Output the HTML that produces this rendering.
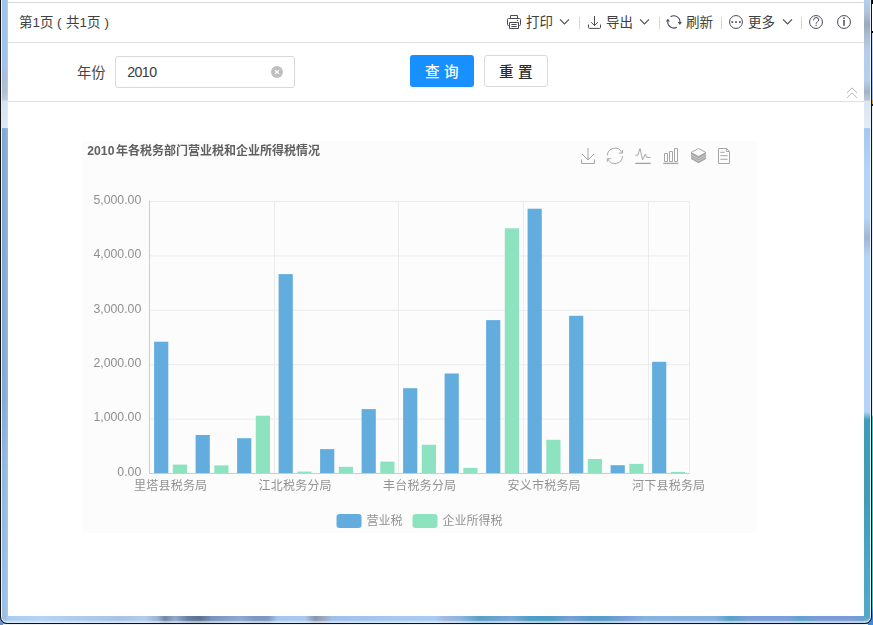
<!DOCTYPE html>
<html lang="zh-CN"><head><meta charset="utf-8"><title>2010年各税务部门营业税和企业所得税情况</title>
<style>
html,body{margin:0;padding:0}
body{width:873px;height:625px;position:relative;overflow:hidden;background:#fff;font-family:"Liberation Sans",sans-serif;}
.ct,.ic,.chart,.abs{position:absolute;display:block;overflow:visible}
.ct text{font-family:"Liberation Sans","Noto Sans CJK SC",sans-serif}
.win{position:absolute;left:8px;top:0;width:856px;height:616px;background:#fff;overflow:hidden}
.topline{position:absolute;left:0;top:2px;width:856px;height:1px;background:#dcdcdc}
.header{position:absolute;left:0;top:3px;width:856px;height:39px;border-bottom:1px solid #e0e0e0;background:#fff}
.params{position:absolute;left:0;top:43px;width:856px;height:58px;border-bottom:1px solid #e0e0e0;background:#fff}
.sep{position:absolute;top:17px;width:1px;height:12px;background:#d5d5dc}
.input{position:absolute;left:115px;top:56px;width:178px;height:29.5px;border:1px solid #d9d9d9;border-radius:3px;background:#fff}
.input span{position:absolute;left:11.2px;top:7.4px;font-size:14.2px;line-height:16px;letter-spacing:-0.55px;color:#3a3a3a}
.clear{position:absolute;left:271px;top:66px;width:12px;height:12px;border-radius:50%;background:#bfbfbf}
.btn{position:absolute;top:55px;width:64px;height:32px;border-radius:3px;box-sizing:border-box}
.btn.primary{left:410px;background:#1890ff}
.btn.plain{left:484px;background:#fff;border:1px solid #d9d9d9}
.chartbg{position:absolute;left:82px;top:141px;width:675px;height:392px;background:#fcfcfc}
.chart{will-change:transform}
.chart text{font-family:"Liberation Sans","Noto Sans CJK SC",sans-serif}
.yl{font-size:12.3px;fill:#8f8f8f}
</style></head><body>

<svg class="abs frame" style="left:0;top:0" width="873" height="625" viewBox="0 0 873 625">
<defs>
<clipPath id="wc"><rect x="1" y="-30" width="870" height="653" rx="6"/></clipPath>
<linearGradient id="gl" x1="0" y1="0" x2="0" y2="625" gradientUnits="userSpaceOnUse"><stop offset="0.0000" stop-color="#a3c4ec"/><stop offset="0.1088" stop-color="#a3c4ec"/><stop offset="0.1216" stop-color="#a9bfdc"/><stop offset="0.1472" stop-color="#b3c0d4"/><stop offset="0.1600" stop-color="#c3cfdf"/><stop offset="0.1624" stop-color="#d9e4f2"/><stop offset="0.2040" stop-color="#e1ebf6"/><stop offset="0.2058" stop-color="#86a9d4"/><stop offset="0.6400" stop-color="#89acd6"/><stop offset="0.7520" stop-color="#96b9e2"/><stop offset="1.0000" stop-color="#9ec1e9"/></linearGradient>
<linearGradient id="glh" x1="0" y1="0" x2="8" y2="0" gradientUnits="userSpaceOnUse"><stop offset="0" stop-color="#1f4a80" stop-opacity=".14"/><stop offset=".5" stop-color="#8090b0" stop-opacity="0"/><stop offset="1" stop-color="#fff" stop-opacity=".2"/></linearGradient>
<linearGradient id="gr" x1="0" y1="0" x2="0" y2="625" gradientUnits="userSpaceOnUse"><stop offset="0.0000" stop-color="#b3cfec"/><stop offset="0.0192" stop-color="#afc3dc"/><stop offset="0.0400" stop-color="#9aa9ba"/><stop offset="0.0544" stop-color="#a9bace"/><stop offset="0.0800" stop-color="#b4cdea"/><stop offset="0.1280" stop-color="#b5d0ee"/><stop offset="0.1472" stop-color="#a3b3c6"/><stop offset="0.1600" stop-color="#bcc8d6"/><stop offset="0.1624" stop-color="#dbe6f3"/><stop offset="0.2040" stop-color="#e2ecf7"/><stop offset="0.2058" stop-color="#a5c8f0"/><stop offset="0.2720" stop-color="#b3d4f7"/><stop offset="0.3488" stop-color="#b3d4f7"/><stop offset="0.3808" stop-color="#9fb7d6"/><stop offset="0.4096" stop-color="#b3d4f7"/><stop offset="0.6592" stop-color="#b3d4f7"/><stop offset="0.6720" stop-color="#3f9db8"/><stop offset="0.8000" stop-color="#409cb6"/><stop offset="0.8960" stop-color="#4aa5c4"/><stop offset="0.9856" stop-color="#52a8c8"/><stop offset="1.0000" stop-color="#7fb2dc"/></linearGradient>
<linearGradient id="gb" x1="0" y1="0" x2="873" y2="0" gradientUnits="userSpaceOnUse"><stop offset="0.0000" stop-color="#a9c9ee"/><stop offset="0.0458" stop-color="#b4d3f5"/><stop offset="0.1375" stop-color="#a8c3e6"/><stop offset="0.1661" stop-color="#b3cbee"/><stop offset="0.1810" stop-color="#98b0d4"/><stop offset="0.1890" stop-color="#7086aa"/><stop offset="0.2005" stop-color="#93a9cc"/><stop offset="0.2153" stop-color="#667ea3"/><stop offset="0.2291" stop-color="#5c7193"/><stop offset="0.2428" stop-color="#7a93ba"/><stop offset="0.2749" stop-color="#8fa8cf"/><stop offset="0.2921" stop-color="#7d97c0"/><stop offset="0.3070" stop-color="#8098c0"/><stop offset="0.3184" stop-color="#a6c6ec"/><stop offset="0.3494" stop-color="#a9c9ee"/><stop offset="0.3608" stop-color="#8795ad"/><stop offset="0.3700" stop-color="#9aa6bb"/><stop offset="0.3803" stop-color="#9fc0ea"/><stop offset="0.4582" stop-color="#a7c9f0"/><stop offset="0.4983" stop-color="#a8cbf2"/><stop offset="0.5097" stop-color="#a0b8dc"/><stop offset="0.5269" stop-color="#8fb5e0"/><stop offset="0.5498" stop-color="#5a9fc6"/><stop offset="0.5727" stop-color="#6fa3d2"/><stop offset="0.5865" stop-color="#7aa6d8"/><stop offset="0.6071" stop-color="#4f9dc2"/><stop offset="0.6323" stop-color="#4f9dc2"/><stop offset="0.6529" stop-color="#789fd6"/><stop offset="0.6758" stop-color="#5a9bc8"/><stop offset="0.6930" stop-color="#5a9bc8"/><stop offset="0.7159" stop-color="#7a9fd8"/><stop offset="0.7388" stop-color="#86b2e0"/><stop offset="0.8190" stop-color="#86b0e0"/><stop offset="0.8362" stop-color="#55a2c8"/><stop offset="0.8568" stop-color="#7a9fd8"/><stop offset="0.9026" stop-color="#7a9fd8"/><stop offset="0.9164" stop-color="#5fa4cc"/><stop offset="0.9370" stop-color="#7a9cd6"/><stop offset="0.9737" stop-color="#7a9cd6"/><stop offset="0.9897" stop-color="#6a9fd0"/><stop offset="1.0000" stop-color="#6a9fd0"/></linearGradient>
<linearGradient id="gbv" x1="0" y1="616" x2="0" y2="623" gradientUnits="userSpaceOnUse"><stop offset="0" stop-color="#fff" stop-opacity="0"/><stop offset=".45" stop-color="#fff" stop-opacity="0"/><stop offset="1" stop-color="#fff" stop-opacity=".22"/></linearGradient>
<linearGradient id="ox" x1="0" y1="0" x2="0" y2="625" gradientUnits="userSpaceOnUse">
<stop offset="0" stop-color="#000"/><stop offset=".0064" stop-color="#000"/><stop offset=".0065" stop-color="#fff"/><stop offset=".0495" stop-color="#fff"/><stop offset=".0496" stop-color="#000"/><stop offset=".0528" stop-color="#000"/><stop offset=".0529" stop-color="#cfe0f5"/><stop offset=".16" stop-color="#9fc0ea"/><stop offset=".1601" stop-color="#f0a030"/><stop offset=".1664" stop-color="#f0a030"/><stop offset=".1665" stop-color="#222"/><stop offset=".1696" stop-color="#222"/><stop offset=".1697" stop-color="#e8eef5"/><stop offset=".664" stop-color="#dfe9f5"/><stop offset=".667" stop-color="#2fd3cf"/><stop offset=".97" stop-color="#35c8c8"/><stop offset=".985" stop-color="#3a8be0"/><stop offset="1" stop-color="#3a8be0"/></linearGradient>
</defs>
<rect x="0" y="0" width="8" height="625" fill="#6c8fbf"/>
<rect x="864" y="0" width="9" height="625" fill="url(#ox)"/>
<rect x="0" y="624" width="873" height="1" fill="#f1f1f1"/>
<rect x="0" y="618" width="3" height="7" fill="#6c8fbf"/>
<rect x="868" y="620" width="5" height="5" fill="#3a8be0"/>
<g clip-path="url(#wc)">
<rect x="0" y="0" width="8" height="625" fill="url(#gl)"/><rect x="0" y="0" width="8" height="625" fill="url(#glh)"/>
<rect x="864" y="0" width="8" height="625" fill="url(#gr)"/>
<rect x="8" y="616" width="856" height="9" fill="url(#gb)"/>
<rect x="0" y="616" width="873" height="9" fill="url(#gbv)"/>
</g>
<rect x="1.5" y="-30" width="869" height="652" rx="5.5" fill="none" stroke="#eaf1f9" stroke-width="1"/>
<rect x="0.5" y="-30" width="871" height="653.5" rx="6.5" fill="none" stroke="#141414" stroke-width="1"/>
</svg>

<div class="win">
<div class="topline"></div>
<div class="header"></div>
<div class="params"></div>
</div>
<svg class="ct" role="img" style="left:19.20px;top:14.30px" width="35.89" height="17.55" viewBox="0 0 35.89 17.55"><text x="0" y="13.5" font-size="13.5" fill="#404040">第1页</text></svg>
<svg class="ct" role="img" style="left:57.30px;top:14.10px" width="6.56" height="17.55" viewBox="0 0 6.56 17.55"><text x="0" y="13.5" font-size="13.5" fill="#404040">(</text></svg>
<svg class="ct" role="img" style="left:65.70px;top:14.30px" width="35.14" height="17.55" viewBox="0 0 35.14 17.55"><text x="0" y="13.5" font-size="13.5" fill="#404040">共1页</text></svg>
<svg class="ct" role="img" style="left:103.80px;top:14.10px" width="6.56" height="17.55" viewBox="0 0 6.56 17.55"><text x="0.5" y="13.5" font-size="13.5" fill="#404040">)</text></svg>
<svg class="ic" style="left:507.00px;top:15.00px" width="14" height="14" viewBox="0 0 14 14" fill="none" stroke="#4a4a55" stroke-width="1.00"><path d="M3.5 3.5V0.5H10.5V3.5M2.5 10.5H1.5Q0.5 10.5 0.5 9.5V4.5Q0.5 3.5 1.5 3.5H12.5Q13.5 3.5 13.5 4.5V9.5Q13.5 10.5 12.5 10.5H11.5M2.5 7.5H11.5V13.5H2.5ZM4.3 9.5H9.7M4.3 11.5H9.7"/><circle cx="10.4" cy="5.4" r="0.65" fill="#4a4a55" stroke="none"/></svg>
<svg class="ct" role="img" style="left:525.50px;top:13.90px" width="28.00" height="17.55" viewBox="0 0 28.00 17.55"><text x="0" y="13.5" font-size="13.5" fill="#404040">打印</text></svg>
<svg class="ic" style="left:559.00px;top:18.00px" width="11" height="8" viewBox="0 0 11 8" fill="none" stroke="#4a4a55" stroke-width="1.10"><path d="M1 1.4L5.5 5.9L10 1.4"/></svg>
<div class="sep" style="left:579px"></div>
<svg class="ic" style="left:588.00px;top:16.00px" width="13" height="13" viewBox="0 0 13 13" fill="none" stroke="#4a4a55" stroke-width="1.00"><path d="M6.5 0V9.5M3.1 6.2L6.5 9.6L9.9 6.2M0.5 8.5V11.4Q0.5 12.4 1.5 12.4H11.5Q12.5 12.4 12.5 11.4V8.5"/></svg>
<svg class="ct" role="img" style="left:605.50px;top:13.90px" width="28.00" height="17.55" viewBox="0 0 28.00 17.55"><text x="0" y="13.5" font-size="13.5" fill="#404040">导出</text></svg>
<svg class="ic" style="left:639.00px;top:18.00px" width="11" height="8" viewBox="0 0 11 8" fill="none" stroke="#4a4a55" stroke-width="1.10"><path d="M1 1.4L5.5 5.9L10 1.4"/></svg>
<div class="sep" style="left:659px"></div>
<svg class="ic" style="left:666.00px;top:15.00px" width="16" height="14" viewBox="0 0 16 14" fill="none" stroke="#4a4a55" stroke-width="1.10"><path d="M4.53 1.78A6.1 6.1 0 0 1 13.95 7.3M10.81 12.24A6.1 6.1 0 0 1 1.75 6.5"/><path d="M11.8 7.1H15.9L13.85 9.9ZM-0.2 6.5H3.9L1.85 3.8Z" fill="#4a4a55" stroke="none"/></svg>
<svg class="ct" role="img" style="left:685.50px;top:13.90px" width="28.00" height="17.55" viewBox="0 0 28.00 17.55"><text x="0" y="13.5" font-size="13.5" fill="#404040">刷新</text></svg>
<div class="sep" style="left:721px"></div>
<svg class="ic" style="left:729.00px;top:15.00px" width="14" height="14" viewBox="0 0 14 14" fill="none" stroke="#4a4a55" stroke-width="1.00"><circle cx="7" cy="7" r="6.45"/><g fill="#4a4a55" stroke="none"><rect x="2.4" y="6.2" width="1.7" height="1.7"/><rect x="6.15" y="6.2" width="1.7" height="1.7"/><rect x="10.0" y="6.2" width="1.7" height="1.7"/></g></svg>
<svg class="ct" role="img" style="left:747.50px;top:13.90px" width="28.00" height="17.55" viewBox="0 0 28.00 17.55"><text x="0" y="13.5" font-size="13.5" fill="#404040">更多</text></svg>
<svg class="ic" style="left:782.00px;top:18.00px" width="11" height="8" viewBox="0 0 11 8" fill="none" stroke="#4a4a55" stroke-width="1.10"><path d="M1 1.4L5.5 5.9L10 1.4"/></svg>
<div class="sep" style="left:801px"></div>
<svg class="ic" style="left:809.00px;top:15.00px" width="14" height="14" viewBox="0 0 14 14" fill="none" stroke="#4a4a55" stroke-width="1.00"><circle cx="7" cy="7" r="6.45"/><path d="M4.6 5.3Q4.6 2.5 7.1 2.5Q9.7 2.5 9.7 4.9Q9.7 6.1 8.4 6.9Q7.1 7.6 7.1 8.7"/><circle cx="7.1" cy="10.4" r="0.7" fill="#4a4a55" stroke="none"/></svg>
<svg class="ic" style="left:837.00px;top:15.00px" width="14" height="14" viewBox="0 0 14 14" fill="none" stroke="#4a4a55" stroke-width="1.00"><circle cx="7" cy="7" r="6.45"/><path d="M7 4.9V10.8" stroke-width="1.5"/><circle cx="7" cy="3.2" r="0.85" fill="#4a4a55" stroke="none"/></svg>
<svg class="ct" role="img" style="left:76.60px;top:64.40px" width="30.00" height="18.59" viewBox="0 0 30.00 18.59"><text x="0" y="14.3" font-size="14.3" fill="#454545">年份</text></svg>
<div class="input"><span>2010</span></div>
<div class="clear"></div>
<svg class="ic" style="left:271px;top:66px" width="12" height="12" viewBox="0 0 12 12"><path d="M4.1 4.1L7.9 7.9M7.9 4.1L4.1 7.9" stroke="#fff" stroke-width="1.2"/></svg>
<div class="btn primary"></div>
<svg class="ct" role="img" style="left:425.20px;top:62.40px" width="16.60" height="18.98" viewBox="0 0 16.60 18.98"><text x="0" y="14.6" font-size="14.6" font-weight="500" fill="#ffffff">查</text></svg>
<svg class="ct" role="img" style="left:444.20px;top:62.40px" width="16.60" height="18.98" viewBox="0 0 16.60 18.98"><text x="0" y="14.6" font-size="14.6" font-weight="500" fill="#ffffff">询</text></svg>
<div class="btn plain"></div>
<svg class="ct" role="img" style="left:499.40px;top:62.40px" width="16.60" height="18.98" viewBox="0 0 16.60 18.98"><text x="0" y="14.6" font-size="14.6" font-weight="500" fill="#2c2c2c">重</text></svg>
<svg class="ct" role="img" style="left:518.20px;top:62.40px" width="16.60" height="18.98" viewBox="0 0 16.60 18.98"><text x="0" y="14.6" font-size="14.6" font-weight="500" fill="#2c2c2c">置</text></svg>
<svg class="ic" style="left:846px;top:87px" width="12" height="12" viewBox="0 0 12 12" fill="none" stroke="#b5b5b5" stroke-width="1"><path d="M1 5.8L6 0.9L11 5.8M1 10.8L6 5.9L11 10.8"/></svg>
<div class="chartbg"></div>
<svg class="chart" style="left:82px;top:141px" width="675" height="392" viewBox="0 0 675 392">
<path d="M67.50 60.50H607.50" stroke="#ebebeb" stroke-width="1"/>
<path d="M67.50 114.90H607.50" stroke="#ebebeb" stroke-width="1"/>
<path d="M67.50 169.30H607.50" stroke="#ebebeb" stroke-width="1"/>
<path d="M67.50 223.70H607.50" stroke="#ebebeb" stroke-width="1"/>
<path d="M67.50 278.10H607.50" stroke="#ebebeb" stroke-width="1"/>
<path d="M192.50 60.50V332.50" stroke="#ebebeb" stroke-width="1"/>
<path d="M316.50 60.50V332.50" stroke="#ebebeb" stroke-width="1"/>
<path d="M441.50 60.50V332.50" stroke="#ebebeb" stroke-width="1"/>
<path d="M566.50 60.50V332.50" stroke="#ebebeb" stroke-width="1"/>
<path d="M607.50 60.50V332.50" stroke="#ebebeb" stroke-width="1"/>
<rect x="72.10" y="200.70" width="14.20" height="131.30" fill="#62addd"/>
<rect x="90.80" y="323.60" width="14.20" height="8.40" fill="#8de2c0"/>
<rect x="113.60" y="294.00" width="14.20" height="38.00" fill="#62addd"/>
<rect x="132.30" y="324.40" width="14.20" height="7.60" fill="#8de2c0"/>
<rect x="155.10" y="297.20" width="14.20" height="34.80" fill="#62addd"/>
<rect x="173.80" y="274.70" width="14.20" height="57.30" fill="#8de2c0"/>
<rect x="196.60" y="133.10" width="14.20" height="198.90" fill="#62addd"/>
<rect x="215.30" y="330.60" width="14.20" height="1.40" fill="#8de2c0"/>
<rect x="238.10" y="308.10" width="14.20" height="23.90" fill="#62addd"/>
<rect x="256.80" y="325.80" width="14.20" height="6.20" fill="#8de2c0"/>
<rect x="279.60" y="268.10" width="14.20" height="63.90" fill="#62addd"/>
<rect x="298.30" y="320.60" width="14.20" height="11.40" fill="#8de2c0"/>
<rect x="321.10" y="247.20" width="14.20" height="84.80" fill="#62addd"/>
<rect x="339.80" y="303.80" width="14.20" height="28.20" fill="#8de2c0"/>
<rect x="362.60" y="232.50" width="14.20" height="99.50" fill="#62addd"/>
<rect x="381.30" y="326.90" width="14.20" height="5.10" fill="#8de2c0"/>
<rect x="404.10" y="179.10" width="14.20" height="152.90" fill="#62addd"/>
<rect x="422.80" y="87.30" width="14.20" height="244.70" fill="#8de2c0"/>
<rect x="445.60" y="67.70" width="14.20" height="264.30" fill="#62addd"/>
<rect x="464.30" y="298.80" width="14.20" height="33.20" fill="#8de2c0"/>
<rect x="487.10" y="174.80" width="14.20" height="157.20" fill="#62addd"/>
<rect x="505.80" y="318.00" width="14.20" height="14.00" fill="#8de2c0"/>
<rect x="528.60" y="324.20" width="14.20" height="7.80" fill="#62addd"/>
<rect x="547.30" y="322.90" width="14.20" height="9.10" fill="#8de2c0"/>
<rect x="570.10" y="220.80" width="14.20" height="111.20" fill="#62addd"/>
<rect x="588.80" y="330.90" width="14.20" height="1.10" fill="#8de2c0"/>
<path d="M67.50 59.50V333.00" stroke="#cccccc" stroke-width="1"/>
<path d="M67.00 332.50H608.00" stroke="#cccccc" stroke-width="1"/>
<text x="59.30" y="62.80" text-anchor="end" class="yl">5,000.00</text>
<text x="59.30" y="117.20" text-anchor="end" class="yl">4,000.00</text>
<text x="59.30" y="171.60" text-anchor="end" class="yl">3,000.00</text>
<text x="59.30" y="226.00" text-anchor="end" class="yl">2,000.00</text>
<text x="59.30" y="280.40" text-anchor="end" class="yl">1,000.00</text>
<text x="59.30" y="334.80" text-anchor="end" class="yl">0.00</text>
<text x="52.10" y="349.30" font-size="12" letter-spacing="0.2" fill="#929292">里塔县税务局</text>
<text x="176.60" y="349.30" font-size="12" letter-spacing="0.2" fill="#929292">江北税务分局</text>
<text x="301.10" y="349.30" font-size="12" letter-spacing="0.2" fill="#929292">丰台税务分局</text>
<text x="425.60" y="349.30" font-size="12" letter-spacing="0.2" fill="#929292">安义市税务局</text>
<text x="550.10" y="349.30" font-size="12" letter-spacing="0.2" fill="#929292">河下县税务局</text>
<text x="5.30" y="14.30" font-size="12.2" font-weight="bold" fill="#606060">2010</text>
<text x="34.00" y="14.30" font-size="12" font-weight="bold" fill="#606060">年各税务部门营业税和企业所得税情况</text>
<rect x="254.50" y="373.00" width="25" height="14" rx="3" fill="#62addd"/>
<text x="284.50" y="384.30" font-size="12" fill="#929292">营业税</text>
<rect x="330.50" y="373.00" width="25" height="14" rx="3" fill="#8de2c0"/>
<text x="360.50" y="384.30" font-size="12" fill="#929292">企业所得税</text>
<g transform="translate(499.00,7.00)" fill="none" stroke="#a6a6a6" stroke-width="1" stroke-linecap="butt" stroke-linejoin="miter"><path d="M7 0V12M1 6L7 12L13 6M0.5 11.5V15.5H13.5V11.5"/></g>
<g transform="translate(525.00,7.00)" fill="none" stroke="#a6a6a6" stroke-width="1" stroke-linecap="butt" stroke-linejoin="miter"><path d="M0.4 7.5A7.6 7.6 0 0 1 14.9 4.6M15.5 8.1A7.6 7.6 0 0 1 1.0 11.1"/><path d="M12.0 5.1H15.6V2.0M3.9 10.7H0.3V13.8"/></g>
<g transform="translate(553.00,7.00)" fill="none" stroke="#a6a6a6" stroke-width="1" stroke-linecap="butt" stroke-linejoin="miter"><path d="M0.5 7.2H2.8L5 0.5L7.6 11.8L10.3 6.2L11.6 9.4H15.5"/><path d="M0.3 15.4H15.7" stroke="#a2a2a2" stroke-width="1.3"/></g>
<g transform="translate(581.00,7.00)" fill="none" stroke="#a6a6a6" stroke-width="1" stroke-linecap="butt" stroke-linejoin="miter"><path d="M1.5 5.5H4.5V13.5H1.5ZM6.5 3.5H9.5V13.5H6.5ZM11.5 0.5H14.5V13.5H11.5Z"/><path d="M0.3 15.4H15.2" stroke="#a2a2a2" stroke-width="1.3"/></g>
<g transform="translate(608.50,7.00)" fill="none" stroke="#a6a6a6" stroke-width="1" stroke-linecap="butt" stroke-linejoin="miter"><path d="M8 0.5L15.5 4.5L8 8.5L0.5 4.5Z"/><path d="M0.5 4.5V11L8 15.3L15.5 11V4.5L8 8.5Z" fill="#a4a4a4" stroke="none"/><path d="M0.5 6.6L8 10.7L15.5 6.6M0.5 8.8L8 12.9L15.5 8.8" stroke="#ededed" stroke-width="0.6"/></g>
<g transform="translate(636.00,7.00)" fill="none" stroke="#a6a6a6" stroke-width="1" stroke-linecap="butt" stroke-linejoin="miter"><path d="M0.5 0.5H8.5L11.5 3.5V15.5H0.5Z M8.5 0.5V3.5H11.5 M2.3 4.3H6.6M2.3 7.7H9.6M2.3 11.3H9.6"/></g>
</svg>
</body></html>
